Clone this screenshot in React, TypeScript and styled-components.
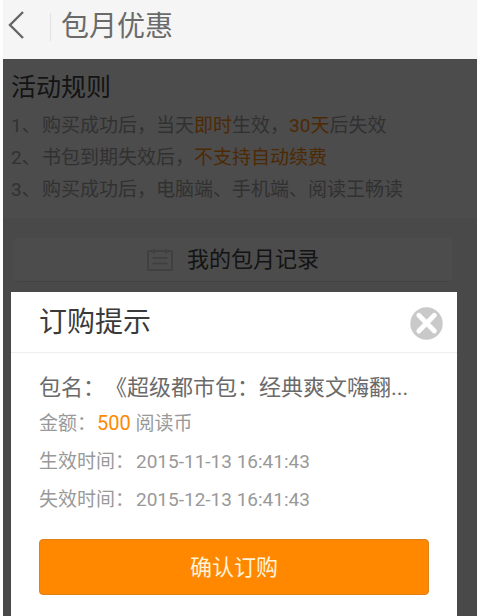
import React from "react";
import styled, { createGlobalStyle } from "styled-components";

const GlobalStyle = createGlobalStyle`
  * { box-sizing: border-box; }
  body {
    margin: 0;
    background: #fdfdfd;
    font-family: Roboto, "Noto Sans CJK SC", sans-serif;
    text-spacing-trim: space-all;
    -webkit-font-smoothing: antialiased;
  }
  button { font-family: inherit; cursor: pointer; }
  h1, h2, p, ol, dl, dd, dt { margin: 0; padding: 0; font-weight: 400; }
`;

const Screen = styled.div`
  display: flex;
  flex-direction: column;
  min-height: 100vh;
  margin: 0 1px 0 3px;
`;

const TopBar = styled.header`
  display: flex;
  align-items: center;
  height: 59px;
  padding: 0 4px 6px;
  background: #f5f5f5;
`;

const BackButton = styled.button`
  display: flex;
  padding: 0 0 4px;
  border: 0;
  background: none;
  color: #666;
`;

const Divider = styled.span`
  width: 1px;
  height: 28px;
  margin: 0 10px 0 25px;
  background: #e2e2e2;
`;

const PageTitle = styled.h1`
  font-size: 28px;
  line-height: 40px;
  color: #6a6a6a;
`;

const Content = styled.main`
  position: relative;
  flex: 1;
  border-top: 1px solid #f0f0f0;
  background: #f3f3f3;
`;

const Rules = styled.section`
  padding: 10px 8px 12px;
  background: #fdfdfd;
`;

const RulesTitle = styled.h2`
  font-size: 25px;
  line-height: 36px;
  color: #444;
`;

const RuleList = styled.ol`
  margin-top: 4px;
  list-style: none;
`;

const Rule = styled.li`
  display: flex;
  font-size: 19px;
  line-height: 32px;
  color: #a6a6a6;
`;

const Marker = styled.span`
  flex: 0 0 31px;
`;

const Accent = styled.em`
  font-style: normal;
  color: #ff8c10;
`;

const RecordsButton = styled.button`
  display: flex;
  align-items: center;
  justify-content: center;
  gap: 14px;
  width: calc(100% - 36px);
  height: 44px;
  margin: 20px 25px 0 11px;
  border: 0;
  border-bottom: 1px solid #e2e2e2;
  border-radius: 4px;
  background: #fdfdfd;
  color: #444;
  font-size: 22px;
  line-height: 32px;
`;

const Backdrop = styled.div`
  position: absolute;
  inset: -1px 0 0;
  display: flex;
  align-items: flex-end;
  padding: 0 20px 0 8px;
  background: rgba(0, 0, 0, 0.7);
`;

const Dialog = styled.section`
  flex: 1;
  min-width: 0;
  background: #fff;
`;

const DialogHeader = styled.header`
  display: flex;
  align-items: center;
  justify-content: space-between;
  height: 61px;
  padding: 2px 14px 0 28px;
  border-bottom: 1px solid #eee;
`;

const DialogTitle = styled.h2`
  font-size: 28px;
  line-height: 40px;
  color: #3a3a3a;
`;

const CloseButton = styled.button`
  display: flex;
  padding: 0;
  border: 0;
  background: none;
`;

const DialogBody = styled.div`
  padding: 18px 28px 21px;
`;

const PackageName = styled.p`
  overflow: hidden;
  white-space: nowrap;
  font-size: 22px;
  line-height: 34px;
  color: #6a6a6a;
`;

const Detail = styled.div`
  display: flex;
  font-size: 19px;
  line-height: 38px;
  color: #999;
`;

const Term = styled.dt<{ $wide?: boolean }>`
  flex: 0 0 ${({ $wide }) => ($wide ? 97 : 58)}px;
`;

const Amount = styled.span`
  font-size: 20px;
  line-height: 20px;
  color: #f80;
`;

const ConfirmButton = styled.button`
  display: block;
  width: 100%;
  height: 56px;
  margin-top: 20px;
  padding: 0 0 4px;
  border: 1px solid #e0801a;
  border-radius: 4px;
  background: #f80;
  color: #fff3d8;
  font-size: 22px;
`;

const BackIcon = () => (
  <svg width="18" height="28" viewBox="0 0 18 28" fill="none" stroke="currentColor" strokeWidth="2.4">
    <path d="M16 1 3 14 16 27" />
  </svg>
);

const RecordIcon = () => (
  <svg width="26" height="22" viewBox="0 0 26 22" fill="none" stroke="#d6d6d6" strokeWidth="2">
    <rect x="1" y="2" width="24" height="19" rx="1" />
    <path d="M7 0v5M19 0v5M5.5 9h15M5.5 14.5h15" />
  </svg>
);

const CloseIcon = () => (
  <svg width="33" height="33" viewBox="0 0 33 33">
    <circle cx="16.5" cy="16.5" r="16.2" fill="#c9c9c9" />
    <path d="M8.8 8.3 24.4 24M24.4 8.3 8.8 24" stroke="#fff" strokeWidth="4.8" strokeLinecap="round" />
  </svg>
);

export default function App() {
  return (
    <>
      <GlobalStyle />
      <Screen>
        <TopBar>
          <BackButton aria-label="返回">
            <BackIcon />
          </BackButton>
          <Divider />
          <PageTitle>包月优惠</PageTitle>
        </TopBar>
        <Content>
          <Rules>
            <RulesTitle>活动规则</RulesTitle>
            <RuleList>
              <Rule>
                <Marker>1、</Marker>
                <p>
                  购买成功后，当天<Accent>即时</Accent>生效，<Accent>30天</Accent>后失效
                </p>
              </Rule>
              <Rule>
                <Marker>2、</Marker>
                <p>
                  书包到期失效后，<Accent>不支持自动续费</Accent>
                </p>
              </Rule>
              <Rule>
                <Marker>3、</Marker>
                <p>购买成功后，电脑端、手机端、阅读王畅读</p>
              </Rule>
            </RuleList>
          </Rules>
          <RecordsButton>
            <RecordIcon />
            我的包月记录
          </RecordsButton>
          <Backdrop>
            <Dialog role="dialog" aria-labelledby="order-title">
              <DialogHeader>
                <DialogTitle id="order-title">订购提示</DialogTitle>
                <CloseButton aria-label="关闭">
                  <CloseIcon />
                </CloseButton>
              </DialogHeader>
              <DialogBody>
                <PackageName>包名：《超级都市包：经典爽文嗨翻...</PackageName>
                <dl>
                  <Detail>
                    <Term>金额：</Term>
                    <dd>
                      <Amount>500</Amount> 阅读币
                    </dd>
                  </Detail>
                  <Detail>
                    <Term $wide>生效时间：</Term>
                    <dd>2015-11-13 16:41:43</dd>
                  </Detail>
                  <Detail>
                    <Term $wide>失效时间：</Term>
                    <dd>2015-12-13 16:41:43</dd>
                  </Detail>
                </dl>
                <ConfirmButton>确认订购</ConfirmButton>
              </DialogBody>
            </Dialog>
          </Backdrop>
        </Content>
      </Screen>
    </>
  );
}
